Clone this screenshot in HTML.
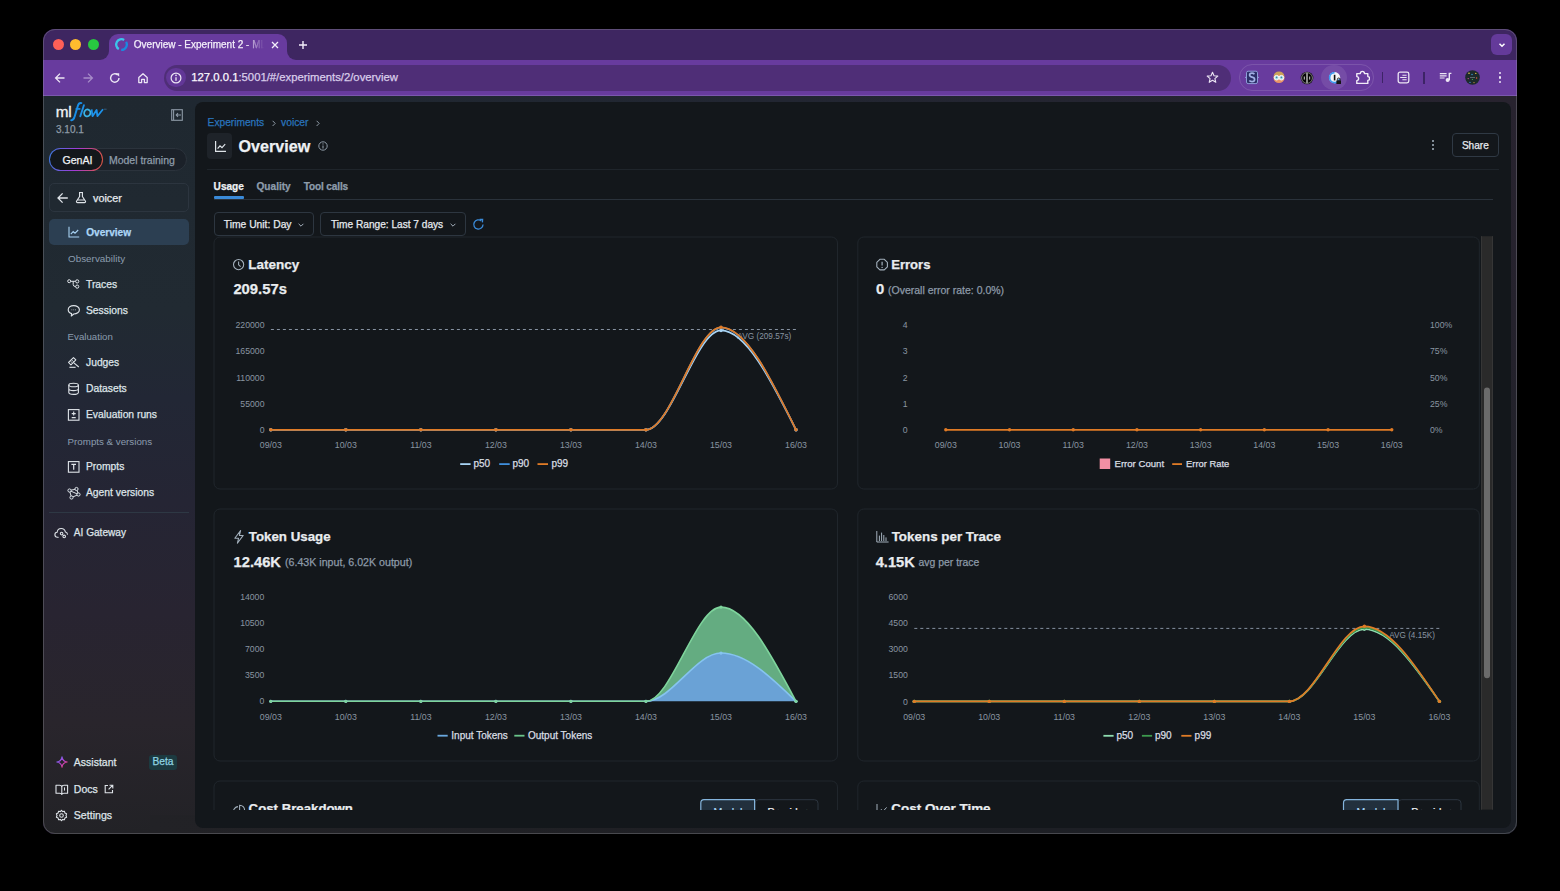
<!DOCTYPE html><html><head><meta charset="utf-8"><style>
html,body{margin:0;padding:0;}
body{width:1560px;height:891px;background:#000;position:relative;overflow:hidden;font-family:'Liberation Sans', sans-serif;}
.r{position:absolute;}
.t{position:absolute;line-height:1;white-space:nowrap;-webkit-text-stroke-width:0.25px;}
svg text{stroke-width:0.25px;}
</style></head><body>
<div class="r" style="left:43px;top:29px;width:1474px;height:805px;background:#3e2661;border-radius:12px;"></div>
<div class="r" style="left:43px;top:60px;width:1474px;height:36px;background:#683b9e;"></div>
<div class="r" style="left:43px;top:95px;width:1474px;height:1px;background:#7b58ad;"></div>
<div class="r" style="left:100px;top:50px;width:196px;height:10px;background:#683b9e;"></div>
<div class="r" style="left:43px;top:29px;width:66.4px;height:31px;background:#3e2661;border-radius:12px 0 9px 0;"></div>
<div class="r" style="left:287px;top:29px;width:1230px;height:31px;background:#3e2661;border-radius:0 12px 0 9px;"></div>
<div class="r" style="left:109.4px;top:34px;width:177.6px;height:27px;background:#683b9e;border-radius:9px 9px 0 0;"></div>
<div class="r" style="left:52.699999999999996px;top:38.8px;width:11.2px;height:11.2px;background:#fe5f57;border-radius:50%;"></div>
<div class="r" style="left:70.30000000000001px;top:38.8px;width:11.2px;height:11.2px;background:#febc2e;border-radius:50%;"></div>
<div class="r" style="left:87.9px;top:38.8px;width:11.2px;height:11.2px;background:#28c840;border-radius:50%;"></div>
<svg class="r" style="left:114px;top:37px;" width="15" height="15" viewBox="0 0 15 15"><path d="M4.85 12.09A5.3 5.3 0 0 1 10.15 2.91" fill="none" stroke="#3cc4ea" stroke-width="2.3"/><path d="M12.09 4.85A5.3 5.3 0 0 1 7.2 12.8" fill="none" stroke="#1a8ae0" stroke-width="2.3"/></svg>
<div class="t" style="left:133.80px;top:39.93px;font-size:10.0px;color:#f3eef9;width:130px;overflow:hidden;white-space:nowrap;-webkit-mask-image:linear-gradient(90deg,#000 86%,transparent 100%);">Overview - Experiment 2 - ML</div>
<svg class="r" style="left:270px;top:40px;" width="10" height="10" viewBox="0 0 10 10"><path d="M2 2L8 8M8 2L2 8" stroke="#f3eefa" stroke-width="1.3"/></svg>
<svg class="r" style="left:297.5px;top:39.5px;" width="10" height="10" viewBox="0 0 10 10"><path d="M5 1V9M1 5H9" stroke="#f3eefa" stroke-width="1.4"/></svg>
<div class="r" style="left:1491.3px;top:34.1px;width:20.5px;height:20.5px;background:#643a9a;border-radius:6px;"></div>
<svg class="r" style="left:1496.5px;top:39.5px;" width="10" height="10" viewBox="0 0 10 10"><path d="M2.5 3.8L5 6.3L7.5 3.8" fill="none" stroke="#fff" stroke-width="1.5"/></svg>
<svg class="r" style="left:54px;top:71.5px;" width="12" height="12" viewBox="0 0 12 12"><path d="M10.5 6H1.8M6 1.6L1.6 6L6 10.4" fill="none" stroke="#ece6f4" stroke-width="1.3"/></svg>
<svg class="r" style="left:81.5px;top:71.5px;" width="12" height="12" viewBox="0 0 12 12"><path d="M1.5 6H10.2M6 1.6L10.4 6L6 10.4" fill="none" stroke="#a78cc9" stroke-width="1.3"/></svg>
<svg class="r" style="left:109px;top:71.5px;" width="12" height="12" viewBox="0 0 12 12"><path d="M10 6A4.2 4.2 0 1 1 8.6 2.9" fill="none" stroke="#ece6f4" stroke-width="1.4"/><path d="M6.6 1.2H10.2V4.8Z" fill="#ece6f4"/></svg>
<svg class="r" style="left:137px;top:71.5px;" width="12" height="12" viewBox="0 0 12 12"><path d="M1.8 5.6L6 1.8L10.2 5.6V10.6H7.4V7.3H4.6V10.6H1.8Z" fill="none" stroke="#ece6f4" stroke-width="1.3" stroke-linejoin="round"/></svg>
<div class="r" style="left:163.6px;top:64.5px;width:1067.4px;height:26.1px;background:#4f2e77;border-radius:13px;"></div>
<div class="r" style="left:166.2px;top:67.7px;width:19.6px;height:19.6px;background:#623797;border-radius:50%;"></div>
<svg class="r" style="left:170px;top:71.5px;" width="12" height="12" viewBox="0 0 12 12"><circle cx="6" cy="6" r="4.9" fill="none" stroke="#ece6f4" stroke-width="1.2"/><path d="M6 5.2V8.8" stroke="#ece6f4" stroke-width="1.3"/><circle cx="6" cy="3.4" r="0.8" fill="#ece6f4"/></svg>
<div class="t" style="left:191.3px;top:71px;font-size:11.3px;line-height:13px;color:#d9cdea;white-space:nowrap"><span style="color:#fbf8fe">127.0.0.1</span>:5001/#/experiments/2/overview</div>
<svg class="r" style="left:1206px;top:71px;" width="13" height="13" viewBox="0 0 13 13"><path d="M6.5 1.3L8 4.8L11.8 5.1L8.9 7.6L9.8 11.3L6.5 9.3L3.2 11.3L4.1 7.6L1.2 5.1L5 4.8Z" fill="none" stroke="#ece6f4" stroke-width="1.1" stroke-linejoin="round"/></svg>
<div class="r" style="left:1238.6px;top:64.2px;width:135.8px;height:26.4px;border:1px solid rgba(255,255,255,0.13);border-radius:13.2px;box-sizing:border-box;"></div>
<svg class="r" style="left:1244px;top:70px;" width="16" height="15" viewBox="0 0 16 15"><rect x="2.5" y="1.2" width="11" height="12.4" rx="1.6" fill="#2c2f68" stroke="#8e9cd8" stroke-width="1"/><path d="M1 7.4H2.5M13.5 7.4H15" stroke="#8e9cd8" stroke-width="1"/><path d="M10.4 4.2Q9.6 3.2 8 3.2Q5.6 3.2 5.6 5.1Q5.6 6.6 8 7.1Q10.6 7.6 10.6 9.5Q10.6 11.6 8 11.6Q6.2 11.6 5.3 10.5" fill="none" stroke="#a3b1e6" stroke-width="1.7"/></svg>
<svg class="r" style="left:1272px;top:70px;" width="14" height="14" viewBox="0 0 14 14"><circle cx="7" cy="7.5" r="5.6" fill="#e89468"/><path d="M1.8 6.2Q2.2 1.6 7 1.6Q11.8 1.6 12.2 6.2Q9.5 4.6 7 4.8Q4.5 4.6 1.8 6.2Z" fill="#c9a05a"/><circle cx="4.6" cy="7.7" r="2.3" fill="#bfe9f2" stroke="#f4f8fa" stroke-width="1"/><circle cx="9.4" cy="7.7" r="2.3" fill="#bfe9f2" stroke="#f4f8fa" stroke-width="1"/><circle cx="4.6" cy="7.4" r="0.9" fill="#3a8aa0"/><circle cx="9.4" cy="7.4" r="0.9" fill="#3a8aa0"/></svg>
<svg class="r" style="left:1299.5px;top:70.5px;" width="14" height="14" viewBox="0 0 14 14"><circle cx="7" cy="7" r="6.3" fill="#050505"/><circle cx="7" cy="7" r="5.4" fill="none" stroke="#8a8a8a" stroke-width="0.9"/><path d="M7 2V12" stroke="#9a9a9a" stroke-width="1.8"/><path d="M4.3 5.5V8.6M9.7 5.5V8.6" stroke="#cfcfcf" stroke-width="1"/></svg>
<div class="r" style="left:1321.4px;top:64.6px;width:25.2px;height:25.2px;background:rgba(255,255,255,0.09);border-radius:50%;"></div>
<svg class="r" style="left:1327.5px;top:70.5px;" width="14" height="14" viewBox="0 0 14 14"><circle cx="6.6" cy="6.6" r="5.6" fill="#f4f4f6"/><path d="M6.6 1.6A5 5 0 1 0 11.4 8" fill="none" stroke="#3b9cf2" stroke-width="1.7"/><path d="M6.6 3.8V9.4" stroke="#111" stroke-width="1.6"/><rect x="8.4" y="9.2" width="4.6" height="3.8" rx="0.6" fill="#151515"/><path d="M9.4 9.2V8.3A1.3 1.3 0 0 1 12 8.3V9.2" fill="none" stroke="#151515" stroke-width="0.9"/></svg>
<svg class="r" style="left:1355px;top:69.5px;" width="15" height="15" viewBox="0 0 15 15"><path d="M1.8 3.6H5.3Q5.3 1.4 7.4 1.4Q9.5 1.4 9.5 3.6H12.8V6.6Q14.6 6.6 14.6 8.5Q14.6 10.4 12.8 10.4V13.4H1.8V10.6Q3.6 10.6 3.6 8.6Q3.6 6.6 1.8 6.6Z" fill="none" stroke="#f1ecf7" stroke-width="1.4" stroke-linejoin="round"/></svg>
<div class="r" style="left:1381.8px;top:71.7px;width:1.5px;height:11.6px;background:#3d2466;"></div>
<svg class="r" style="left:1397px;top:71px;" width="13" height="13" viewBox="0 0 13 13"><rect x="1.2" y="1.2" width="10.6" height="10.6" rx="1.8" fill="none" stroke="#ece6f4" stroke-width="1.3"/><path d="M5.4 4.2H9.6M3.2 6.5H9.6M5.4 8.8H9.6" stroke="#ece6f4" stroke-width="1.1"/></svg>
<div class="r" style="left:1423.3px;top:71.5px;width:1.5px;height:12px;background:#3d2466;"></div>
<svg class="r" style="left:1438.5px;top:71px;" width="13" height="12" viewBox="0 0 13 12"><path d="M0.8 2.6H7.6M0.8 4.8H7.6M0.8 7H5.6" stroke="#ece6f4" stroke-width="1.2"/><circle cx="8.6" cy="9.1" r="2" fill="#ece6f4"/><path d="M10.3 9.2V2.4H12.4" fill="none" stroke="#ece6f4" stroke-width="1.4"/></svg>
<svg class="r" style="left:1465px;top:69.7px;" width="15" height="15" viewBox="0 0 15 15"><circle cx="7.5" cy="7.5" r="7.3" fill="#1d2a2c"/><circle cx="4" cy="3.2" r="0.8" fill="#e8d04a"/><circle cx="10.8" cy="3.4" r="0.7" fill="#e8c040"/><circle cx="7" cy="4.5" r="0.7" fill="#3aa0e0"/><circle cx="3.2" cy="8.6" r="0.7" fill="#d04aa0"/><circle cx="11.6" cy="8" r="0.7" fill="#e0603a"/><circle cx="7.4" cy="9.5" r="0.6" fill="#40c050"/><circle cx="5" cy="12.4" r="0.7" fill="#3a80e8"/><circle cx="9" cy="12.6" r="0.6" fill="#e0a040"/><path d="M5 7.5H10" stroke="#9aa" stroke-width="0.5"/></svg>
<div class="r" style="left:1498.9px;top:72.04999999999998px;width:2.3px;height:2.3px;background:#ece6f4;border-radius:50%;"></div>
<div class="r" style="left:1498.9px;top:76.44999999999999px;width:2.3px;height:2.3px;background:#ece6f4;border-radius:50%;"></div>
<div class="r" style="left:1498.9px;top:80.85px;width:2.3px;height:2.3px;background:#ece6f4;border-radius:50%;"></div>
<div class="r" style="left:43px;top:96px;width:1474px;height:738px;background:linear-gradient(180deg,#1f2830 0%,#212a32 29%,#222735 41%,#252534 55%,#282431 70%,#29252c 85%,#222226 100%);border-radius:0 0 12px 12px;"></div>
<div class="r" style="left:180px;top:96px;width:1337px;height:12px;background:linear-gradient(90deg,#1f2831 0%,#222632 45%,#27232f 100%);border-radius:0 0 0 0;"></div>
<div class="r" style="left:1490px;top:96px;width:27px;height:738px;background:linear-gradient(180deg,#28232f 0%,#25222d 30%,#1f2128 60%,#1b1f26 100%);border-radius:0 0 12px 0;"></div>
<div class="r" style="left:150px;top:815px;width:1367px;height:19px;background:linear-gradient(90deg,#222226 0%,#1e1f24 50%,#1b1f26 100%);border-radius:0 0 12px 0;"></div>
<div class="r" style="left:195px;top:102px;width:1316px;height:726px;background:#13171b;border-radius:8px;"></div>
<div class="t" style="left:55.80px;top:104.25px;font-size:15.3px;color:#f2f4f6;-webkit-text-stroke:0.3px #f2f4f6;letter-spacing:-0.4px;">ml</div>
<svg class="r" style="left:68px;top:100px;" width="42" height="24" viewBox="0 0 42 24"><defs><linearGradient id="lg" x1="0" y1="0" x2="1" y2="0"><stop offset="0" stop-color="#1b8de6"/><stop offset="1" stop-color="#1f95ea"/></linearGradient></defs><path d="M3.2 20.2Q5.6 20.6 6.6 16.6L10 5.4Q10.9 2.6 13.4 3.1" fill="none" stroke="#1a8ee6" stroke-width="1.9" stroke-linecap="round"/><path d="M7.6 8.9H12.4" stroke="#1a8ee6" stroke-width="1.7"/><path d="M12.3 16.3L15.9 5.2" stroke="#1d90e8" stroke-width="1.9" stroke-linecap="round"/><ellipse cx="19.3" cy="12.9" rx="3.1" ry="3.5" transform="rotate(15 19.3 12.9)" fill="none" stroke="#3bb3e6" stroke-width="1.8"/><path d="M23.6 9.4L24.5 16.2L28.6 9.9L29.4 16.2L35 9.2" fill="none" stroke="#1d92ea" stroke-width="1.8" stroke-linejoin="round"/><path d="M36 9.2H38.6" stroke="#4a7fa8" stroke-width="0.6"/></svg>
<div class="t" style="left:56.00px;top:124.73px;font-size:10px;color:#8e9aa6;">3.10.1</div>
<svg class="r" style="left:170.5px;top:108.5px;" width="12" height="12" viewBox="0 0 12 12"><rect x="0.7" y="0.7" width="10.6" height="10.6" fill="none" stroke="#8d99a5" stroke-width="1.1"/><path d="M2.6 1V11" stroke="#8d99a5" stroke-width="1.1"/><path d="M10 6H5.2M7 4.2L5.2 6L7 7.8" fill="none" stroke="#8d99a5" stroke-width="1.1"/></svg>
<div class="r" style="left:49px;top:148.1px;width:138.4px;height:23px;background:#1b2129;border:1px solid #2b333c;border-radius:12px;box-sizing:border-box;"></div>
<div class="r" style="left:49px;top:148.1px;width:54px;height:23px;background:linear-gradient(100deg,#3a7be0,#a23ad8 50%,#e0583a);border-radius:12px;"></div>
<div class="r" style="left:50.2px;top:149.3px;width:51.6px;height:20.6px;background:#13171b;border-radius:11px;"></div>
<div class="t" style="left:62.40px;top:154.63px;font-size:10.6px;color:#eef1f4;">GenAI</div>
<div class="t" style="left:108.90px;top:154.51px;font-size:10.5px;color:#8f9dab;">Model training</div>
<div class="r" style="left:49.2px;top:183.3px;width:139.7px;height:29.2px;border:1px solid #2c353f;border-radius:5px;box-sizing:border-box;"></div>
<svg class="r" style="left:55.5px;top:192px;" width="13" height="12" viewBox="0 0 13 12"><path d="M11.8 6H2M6.6 1.4L2 6L6.6 10.6" fill="none" stroke="#dfe4e9" stroke-width="1.3"/></svg>
<svg class="r" style="left:74.5px;top:191px;" width="12" height="13" viewBox="0 0 12 13"><path d="M4 1.5H8M4.6 1.5V5.5L1.5 10.2Q1.2 11.6 2.6 11.6H9.4Q10.8 11.6 10.5 10.2L7.4 5.5V1.5M2.4 9H9.6" fill="none" stroke="#dfe4e9" stroke-width="1.15" stroke-linejoin="round"/></svg>
<div class="t" style="left:93.00px;top:193.26px;font-size:10.8px;color:#e6eaee;">voicer</div>
<div class="r" style="left:49.2px;top:219px;width:139.7px;height:25.5px;background:#2c3f52;border-radius:5px;"></div>
<svg class="r" style="left:67.5px;top:226px;" width="12" height="12" viewBox="0 0 12 12"><path d="M1 0.8V11H11.2" fill="none" stroke="#a8d2f3" stroke-width="1.1"/><path d="M2.8 8.2L5.2 5.6L7 7.2L10.2 4" fill="none" stroke="#a8d2f3" stroke-width="1.1"/></svg>
<div class="t" style="left:86.20px;top:228.35px;font-size:10.1px;color:#acd6f6;font-weight:700;">Overview</div>
<div class="t" style="left:68.00px;top:254.02px;font-size:9.9px;color:#8b9cae;-webkit-text-stroke-width:0;">Observability</div>
<svg class="r" style="left:67px;top:277.5px;" width="14" height="14" viewBox="0 0 14 14"><circle cx="2.2" cy="3.2" r="1.5" fill="none" stroke="#dfe4e9" stroke-width="1"/><circle cx="10.2" cy="3.4" r="1.6" fill="none" stroke="#dfe4e9" stroke-width="1"/><circle cx="10.2" cy="8.6" r="1.6" fill="none" stroke="#dfe4e9" stroke-width="1"/><path d="M3.7 3.3H8.6M6.2 3.3V6.5Q6.2 8.6 8.6 8.6" fill="none" stroke="#dfe4e9" stroke-width="1"/></svg>
<div class="t" style="left:86.00px;top:280.08px;font-size:10.3px;color:#dfe4e9;">Traces</div>
<svg class="r" style="left:67px;top:303.5px;" width="14" height="14" viewBox="0 0 14 14"><path d="M6.7 1.6C3.6 1.6 1.2 3.4 1.2 5.8C1.2 7.6 2.6 9 4.6 9.6L4.3 12L6.8 10C9.9 10 12.4 8.2 12.4 5.8C12.4 3.4 9.8 1.6 6.7 1.6Z" fill="none" stroke="#dfe4e9" stroke-width="1.1" stroke-linejoin="round"/><path d="M4.6 5.8H5.2M6.5 5.8H7.1M8.4 5.8H9" stroke="#dfe4e9" stroke-width="1"/></svg>
<div class="t" style="left:86.00px;top:306.08px;font-size:10.3px;color:#dfe4e9;">Sessions</div>
<div class="t" style="left:67.60px;top:331.99px;font-size:9.7px;color:#8b9cae;-webkit-text-stroke-width:0;">Evaluation</div>
<svg class="r" style="left:67px;top:355.5px;" width="14" height="14" viewBox="0 0 14 14"><path d="M6.47 1.53L8.87 3.93L3.93 8.87L1.53 6.47Z" fill="none" stroke="#dfe4e9" stroke-width="1.05" stroke-linejoin="round"/><path d="M4.4 3.6L6.8 6M3.2 4.8L5.6 7.2" stroke="#dfe4e9" stroke-width="0.8"/><path d="M6.6 6.6L11.8 11" stroke="#dfe4e9" stroke-width="1.1"/><path d="M2.4 11.3H8.6" stroke="#dfe4e9" stroke-width="1.1"/></svg>
<div class="t" style="left:86.00px;top:358.08px;font-size:10.3px;color:#dfe4e9;">Judges</div>
<svg class="r" style="left:67px;top:381.5px;" width="14" height="14" viewBox="0 0 14 14"><ellipse cx="6.6" cy="3" rx="4.8" ry="1.8" fill="none" stroke="#dfe4e9" stroke-width="1.1"/><path d="M1.8 3V10.6C1.8 11.6 4 12.4 6.6 12.4S11.4 11.6 11.4 10.6V3M1.8 6.8C1.8 7.8 4 8.6 6.6 8.6S11.4 7.8 11.4 6.8" fill="none" stroke="#dfe4e9" stroke-width="1.1"/></svg>
<div class="t" style="left:86.00px;top:384.08px;font-size:10.3px;color:#dfe4e9;">Datasets</div>
<svg class="r" style="left:67px;top:407.5px;" width="14" height="14" viewBox="0 0 14 14"><rect x="1.4" y="1.6" width="10.6" height="10.6" fill="none" stroke="#dfe4e9" stroke-width="1.1"/><path d="M6.7 3.6V7.6M4.7 5.6H8.7M4.7 9.6H8.7" stroke="#dfe4e9" stroke-width="1.1"/></svg>
<div class="t" style="left:86.00px;top:410.08px;font-size:10.3px;color:#dfe4e9;">Evaluation runs</div>
<div class="t" style="left:67.60px;top:436.55px;font-size:9.75px;color:#8b9cae;-webkit-text-stroke-width:0;">Prompts &amp; versions</div>
<svg class="r" style="left:67px;top:459.5px;" width="14" height="14" viewBox="0 0 14 14"><rect x="1.4" y="1.6" width="10.6" height="10.6" fill="none" stroke="#dfe4e9" stroke-width="1.1"/><path d="M4.4 4.4H9M6.7 4.4V9.8" stroke="#dfe4e9" stroke-width="1.2"/></svg>
<div class="t" style="left:86.00px;top:462.08px;font-size:10.3px;color:#dfe4e9;">Prompts</div>
<svg class="r" style="left:67px;top:485.5px;" width="14" height="14" viewBox="0 0 14 14"><path d="M2.5 4.5L9.5 3L11.5 8.5L4.5 11.5Z M2.5 4.5L11.5 8.5" fill="none" stroke="#dfe4e9" stroke-width="1"/><circle cx="2.5" cy="4.5" r="1.6" fill="#23283a" stroke="#dfe4e9" stroke-width="1"/><circle cx="9.5" cy="3" r="1.6" fill="#23283a" stroke="#dfe4e9" stroke-width="1"/><circle cx="11.5" cy="8.5" r="1.6" fill="#23283a" stroke="#dfe4e9" stroke-width="1"/><circle cx="4.5" cy="11.5" r="1.6" fill="#23283a" stroke="#dfe4e9" stroke-width="1"/></svg>
<div class="t" style="left:86.00px;top:488.08px;font-size:10.3px;color:#dfe4e9;">Agent versions</div>
<div class="r" style="left:49.1px;top:512px;width:139.8px;height:1px;background:#2e3844;"></div>
<svg class="r" style="left:54px;top:525.5px;" width="15" height="14" viewBox="0 0 15 14"><path d="M4.2 11.2H3.4C1.9 11.2 0.9 10 0.9 8.7C0.9 7.4 1.9 6.4 3.1 6.3C3.4 4.1 5.1 2.5 7.2 2.5C9.3 2.5 11 4 11.4 6C12.6 6.2 13.4 7.2 13.4 8.3" fill="none" stroke="#dfe4e9" stroke-width="1.1" stroke-linecap="round"/><circle cx="7.6" cy="7.6" r="1.3" fill="none" stroke="#dfe4e9" stroke-width="1.05"/><circle cx="10.2" cy="10.4" r="1.3" fill="none" stroke="#dfe4e9" stroke-width="1.05"/><path d="M8.5 8.5L9.3 9.5" stroke="#dfe4e9" stroke-width="1"/></svg>
<div class="t" style="left:73.80px;top:527.65px;font-size:10.1px;color:#dfe4e9;">AI Gateway</div>
<svg class="r" style="left:55.5px;top:756.2px;" width="12" height="12" viewBox="0 0 12 12"><defs><linearGradient id="ag" x1="0" y1="0" x2="1" y2="1"><stop offset="0" stop-color="#4a7be8"/><stop offset="0.5" stop-color="#b440d8"/><stop offset="1" stop-color="#f04a4a"/></linearGradient></defs><path d="M6 0.8Q6.6 5.4 11.2 6Q6.6 6.6 6 11.2Q5.4 6.6 0.8 6Q5.4 5.4 6 0.8Z" fill="none" stroke="url(#ag)" stroke-width="1.2" stroke-linejoin="round"/></svg>
<div class="t" style="left:73.80px;top:757.11px;font-size:10.5px;color:#dfe4e9;">Assistant</div>
<div class="r" style="left:149px;top:754.6px;width:27.9px;height:15.3px;background:#1c3a40;border-radius:3px;"></div>
<div class="t" style="left:152.50px;top:757.37px;font-size:10.2px;color:#8fd4e2;">Beta</div>
<svg class="r" style="left:54.5px;top:783px;" width="14" height="13" viewBox="0 0 14 13"><path d="M1 2.2H4.6Q6.6 2.2 6.8 4V11.4Q6.6 10.2 4.6 10.2H1Z M12.6 2.2H9Q7 2.2 6.8 4V11.4Q7 10.2 9 10.2H12.6Z" fill="none" stroke="#dfe4e9" stroke-width="1.1" stroke-linejoin="round"/><path d="M9.5 4.4V7.6" stroke="#dfe4e9" stroke-width="1"/></svg>
<div class="t" style="left:73.80px;top:783.91px;font-size:10.5px;color:#dfe4e9;">Docs</div>
<svg class="r" style="left:103.5px;top:784px;" width="10" height="10" viewBox="0 0 10 10"><path d="M4 1.5H1.2V8.8H8.5V6" fill="none" stroke="#dfe4e9" stroke-width="1.1"/><path d="M5.5 1.2H8.8V4.5M8.8 1.2L4.6 5.4" fill="none" stroke="#dfe4e9" stroke-width="1.1"/></svg>
<svg class="r" style="left:54.5px;top:809px;" width="13" height="13" viewBox="0 0 13 13"><path d="M6.5 1.2L7.6 2.6L9.4 2.2L9.9 4L11.6 4.8L11 6.5L11.6 8.2L9.9 9L9.4 10.8L7.6 10.4L6.5 11.8L5.4 10.4L3.6 10.8L3.1 9L1.4 8.2L2 6.5L1.4 4.8L3.1 4L3.6 2.2L5.4 2.6Z" fill="none" stroke="#dfe4e9" stroke-width="1.05" stroke-linejoin="round"/><circle cx="6.5" cy="6.5" r="1.8" fill="none" stroke="#dfe4e9" stroke-width="1.05"/></svg>
<div class="t" style="left:73.80px;top:810.03px;font-size:10.6px;color:#dfe4e9;">Settings</div>
<div class="t" style="left:207.60px;top:117.67px;font-size:10.2px;color:#2a74bc;">Experiments</div>
<svg class="r" style="left:270.5px;top:118.5px;" width="6" height="9" viewBox="0 0 6 9"><path d="M1.6 1.8L4.2 4.4L1.6 7" fill="none" stroke="#8d99a5" stroke-width="1"/></svg>
<div class="t" style="left:281.00px;top:117.58px;font-size:10.3px;color:#2a74bc;">voicer</div>
<svg class="r" style="left:315.3px;top:118.5px;" width="6" height="9" viewBox="0 0 6 9"><path d="M1.6 1.8L4.2 4.4L1.6 7" fill="none" stroke="#8d99a5" stroke-width="1"/></svg>
<div class="r" style="left:207.4px;top:133px;width:24.6px;height:25.7px;background:#1e2329;border-radius:4px;"></div>
<svg class="r" style="left:213.5px;top:139.5px;" width="13" height="13" viewBox="0 0 13 13"><path d="M1.6 1V11.4H12" fill="none" stroke="#dfe4e9" stroke-width="1.2"/><path d="M3.6 8.6L6 5.8L8 7.6L11.2 4.2" fill="none" stroke="#dfe4e9" stroke-width="1.2"/></svg>
<div class="t" style="left:238.60px;top:138.37px;font-size:16.1px;color:#eef1f4;font-weight:700;">Overview</div>
<svg class="r" style="left:317.5px;top:141px;" width="10" height="10" viewBox="0 0 10 10"><circle cx="5" cy="5" r="4.2" fill="none" stroke="#8d99a5" stroke-width="1"/><path d="M5 4.4V7.4" stroke="#8d99a5" stroke-width="1.1"/><circle cx="5" cy="2.9" r="0.65" fill="#8d99a5"/></svg>
<div class="r" style="left:1432.1000000000001px;top:140.29999999999998px;width:2.2px;height:2.2px;background:#a9b6c2;border-radius:50%;"></div>
<div class="r" style="left:1432.1000000000001px;top:144.1px;width:2.2px;height:2.2px;background:#a9b6c2;border-radius:50%;"></div>
<div class="r" style="left:1432.1000000000001px;top:147.9px;width:2.2px;height:2.2px;background:#a9b6c2;border-radius:50%;"></div>
<div class="r" style="left:1452.1px;top:133.2px;width:46.5px;height:24px;border:1px solid #2f3944;border-radius:4px;box-sizing:border-box;"></div>
<div class="t" style="left:1461.90px;top:140.65px;font-size:10.1px;color:#e6eaee;">Share</div>
<div class="r" style="left:207px;top:168.5px;width:1291.5px;height:1px;background:#1f252b;"></div>
<div class="t" style="left:213.60px;top:181.55px;font-size:10.1px;color:#eef1f4;font-weight:700;">Usage</div>
<div class="t" style="left:256.50px;top:181.55px;font-size:10.1px;color:#8d9cab;font-weight:700;">Quality</div>
<div class="t" style="left:303.70px;top:181.55px;font-size:10.1px;color:#8d9cab;font-weight:700;letter-spacing:-0.15px;">Tool calls</div>
<div class="r" style="left:213.6px;top:198.5px;width:1279px;height:1px;background:#2a323b;"></div>
<div class="r" style="left:213.6px;top:196.2px;width:30.5px;height:3px;background:#3a8ad8;border-radius:1px;"></div>
<div class="r" style="left:213.7px;top:212.3px;width:100px;height:23.5px;border:1px solid #2d3640;border-radius:4px;box-sizing:border-box;"></div>
<div class="t" style="left:223.80px;top:219.78px;font-size:10.3px;color:#e6eaee;">Time Unit: Day</div>
<svg class="r" style="left:297px;top:220.5px;" width="8" height="8" viewBox="0 0 8 8"><path d="M1.6 2.8L4 5.2L6.4 2.8" fill="none" stroke="#a3afbb" stroke-width="1"/></svg>
<div class="r" style="left:320.4px;top:212.3px;width:145.2px;height:23.5px;border:1px solid #2d3640;border-radius:4px;box-sizing:border-box;"></div>
<div class="t" style="left:331.00px;top:219.91px;font-size:10.15px;color:#e6eaee;">Time Range: Last 7 days</div>
<svg class="r" style="left:449px;top:220.5px;" width="8" height="8" viewBox="0 0 8 8"><path d="M1.6 2.8L4 5.2L6.4 2.8" fill="none" stroke="#a3afbb" stroke-width="1"/></svg>
<svg class="r" style="left:471.5px;top:217.5px;" width="13" height="13" viewBox="0 0 13 13"><path d="M11 6.5A4.6 4.6 0 1 1 9.4 3" fill="none" stroke="#3a8ad8" stroke-width="1.3"/><path d="M7.6 1.3L10.6 1.4L10.4 4.4" fill="none" stroke="#3a8ad8" stroke-width="1.3"/></svg>
<svg class="r" style="left:195px;top:236px;font-family:'Liberation Sans', sans-serif" width="1300" height="574" viewBox="195 236 1300 574"><rect x="214.00" y="237.00" width="623.50" height="252.00" rx="6" fill="none" stroke="#20262c" stroke-width="1"/><rect x="857.80" y="237.00" width="621.50" height="252.00" rx="6" fill="none" stroke="#20262c" stroke-width="1"/><rect x="214.00" y="509.00" width="623.50" height="252.00" rx="6" fill="none" stroke="#20262c" stroke-width="1"/><rect x="857.80" y="509.00" width="621.50" height="252.00" rx="6" fill="none" stroke="#20262c" stroke-width="1"/><rect x="214.00" y="781.00" width="623.50" height="252.00" rx="6" fill="none" stroke="#20262c" stroke-width="1"/><rect x="857.80" y="781.00" width="621.50" height="252.00" rx="6" fill="none" stroke="#20262c" stroke-width="1"/><circle cx="238.6" cy="264.6" r="5.1" fill="none" stroke="#a3b0bc" stroke-width="1.1"/><path d="M238.6 261.4V264.8L240.6 266.6" fill="none" stroke="#a3b0bc" stroke-width="1.1"/><text x="248.30" y="269.40" font-size="13.5" fill="#e9ecef" stroke="#e9ecef" text-anchor="start" font-weight="700">Latency</text><text x="233.40" y="294.30" font-size="14.8" fill="#e9ecef" stroke="#e9ecef" text-anchor="start" font-weight="700">209.57s</text><text x="264.50" y="328.00" font-size="8.7" fill="#8995a1" stroke="#8995a1" text-anchor="end" style="stroke-width:0">220000</text><text x="264.50" y="354.25" font-size="8.7" fill="#8995a1" stroke="#8995a1" text-anchor="end" style="stroke-width:0">165000</text><text x="264.50" y="380.50" font-size="8.7" fill="#8995a1" stroke="#8995a1" text-anchor="end" style="stroke-width:0">110000</text><text x="264.50" y="406.75" font-size="8.7" fill="#8995a1" stroke="#8995a1" text-anchor="end" style="stroke-width:0">55000</text><text x="264.50" y="433.00" font-size="8.7" fill="#8995a1" stroke="#8995a1" text-anchor="end" style="stroke-width:0">0</text><text x="270.80" y="447.70" font-size="8.8" fill="#8995a1" stroke="#8995a1" text-anchor="middle" style="stroke-width:0">09/03</text><text x="345.83" y="447.70" font-size="8.8" fill="#8995a1" stroke="#8995a1" text-anchor="middle" style="stroke-width:0">10/03</text><text x="420.86" y="447.70" font-size="8.8" fill="#8995a1" stroke="#8995a1" text-anchor="middle" style="stroke-width:0">11/03</text><text x="495.89" y="447.70" font-size="8.8" fill="#8995a1" stroke="#8995a1" text-anchor="middle" style="stroke-width:0">12/03</text><text x="570.92" y="447.70" font-size="8.8" fill="#8995a1" stroke="#8995a1" text-anchor="middle" style="stroke-width:0">13/03</text><text x="645.95" y="447.70" font-size="8.8" fill="#8995a1" stroke="#8995a1" text-anchor="middle" style="stroke-width:0">14/03</text><text x="720.98" y="447.70" font-size="8.8" fill="#8995a1" stroke="#8995a1" text-anchor="middle" style="stroke-width:0">15/03</text><text x="796.01" y="447.70" font-size="8.8" fill="#8995a1" stroke="#8995a1" text-anchor="middle" style="stroke-width:0">16/03</text><text x="737.30" y="339.40" font-size="8.25" fill="#8995a1" stroke="#8995a1" text-anchor="start" style="stroke-width:0">AVG (209.57s)</text><path d="M270.9 329.5H796.2" stroke="#8591a0" stroke-width="1" stroke-dasharray="3 3"/><path d="M270.80,429.80C295.81,429.80 320.82,429.80 345.83,429.80C370.84,429.80 395.85,429.80 420.86,429.80C445.87,429.80 470.88,429.80 495.89,429.80C520.90,429.80 545.91,429.80 570.92,429.80C595.93,429.80 620.94,429.80 645.95,429.80C670.96,429.80 695.97,330.43 720.98,330.43C745.99,330.43 771.00,380.12 796.01,429.80" fill="none" stroke="#a8d4f4" stroke-width="1.7"/><circle cx="270.80" cy="429.80" r="1.7" fill="#a8d4f4"/><circle cx="345.83" cy="429.80" r="1.7" fill="#a8d4f4"/><circle cx="420.86" cy="429.80" r="1.7" fill="#a8d4f4"/><circle cx="495.89" cy="429.80" r="1.7" fill="#a8d4f4"/><circle cx="570.92" cy="429.80" r="1.7" fill="#a8d4f4"/><circle cx="645.95" cy="429.80" r="1.7" fill="#a8d4f4"/><circle cx="720.98" cy="330.43" r="1.7" fill="#a8d4f4"/><circle cx="796.01" cy="429.80" r="1.7" fill="#a8d4f4"/><path d="M270.80,429.80C295.81,429.80 320.82,429.80 345.83,429.80C370.84,429.80 395.85,429.80 420.86,429.80C445.87,429.80 470.88,429.80 495.89,429.80C520.90,429.80 545.91,429.80 570.92,429.80C595.93,429.80 620.94,429.80 645.95,429.80C670.96,429.80 695.97,327.57 720.98,327.57C745.99,327.57 771.00,378.68 796.01,429.80" fill="none" stroke="#3f8fdc" stroke-width="1.7"/><circle cx="270.80" cy="429.80" r="1.7" fill="#3f8fdc"/><circle cx="345.83" cy="429.80" r="1.7" fill="#3f8fdc"/><circle cx="420.86" cy="429.80" r="1.7" fill="#3f8fdc"/><circle cx="495.89" cy="429.80" r="1.7" fill="#3f8fdc"/><circle cx="570.92" cy="429.80" r="1.7" fill="#3f8fdc"/><circle cx="645.95" cy="429.80" r="1.7" fill="#3f8fdc"/><circle cx="720.98" cy="327.57" r="1.7" fill="#3f8fdc"/><circle cx="796.01" cy="429.80" r="1.7" fill="#3f8fdc"/><path d="M270.80,429.80C295.81,429.80 320.82,429.80 345.83,429.80C370.84,429.80 395.85,429.80 420.86,429.80C445.87,429.80 470.88,429.80 495.89,429.80C520.90,429.80 545.91,429.80 570.92,429.80C595.93,429.80 620.94,429.80 645.95,429.80C670.96,429.80 695.97,327.28 720.98,327.28C745.99,327.28 771.00,378.54 796.01,429.80" fill="none" stroke="#e07b26" stroke-width="1.7"/><circle cx="270.80" cy="429.80" r="1.7" fill="#e07b26"/><circle cx="345.83" cy="429.80" r="1.7" fill="#e07b26"/><circle cx="420.86" cy="429.80" r="1.7" fill="#e07b26"/><circle cx="495.89" cy="429.80" r="1.7" fill="#e07b26"/><circle cx="570.92" cy="429.80" r="1.7" fill="#e07b26"/><circle cx="645.95" cy="429.80" r="1.7" fill="#e07b26"/><circle cx="720.98" cy="327.28" r="1.7" fill="#e07b26"/><circle cx="796.01" cy="429.80" r="1.7" fill="#e07b26"/><path d="M460.20 464.10H470.60" stroke="#a8d4f4" stroke-width="1.8"/><text x="473.40" y="466.90" font-size="10" fill="#d9dee3" stroke="#d9dee3" text-anchor="start">p50</text><path d="M499.20 464.10H509.70" stroke="#3f8fdc" stroke-width="1.8"/><text x="512.40" y="466.90" font-size="10" fill="#d9dee3" stroke="#d9dee3" text-anchor="start">p90</text><path d="M537.50 464.10H548.00" stroke="#e07b26" stroke-width="1.8"/><text x="551.40" y="466.90" font-size="10" fill="#d9dee3" stroke="#d9dee3" text-anchor="start">p99</text><path d="M879.9 259.3H884.3L887.4 262.4V266.8L884.3 269.9H879.9L876.8 266.8V262.4Z" fill="none" stroke="#a3b0bc" stroke-width="1.1" stroke-linejoin="round"/><path d="M882.1 261.8V265.4" stroke="#a3b0bc" stroke-width="1.2"/><circle cx="882.1" cy="267.4" r="0.7" fill="#a3b0bc"/><text x="891.20" y="269.40" font-size="13.1" fill="#e9ecef" stroke="#e9ecef" text-anchor="start" font-weight="700">Errors</text><text x="876.10" y="294.30" font-size="14.8" fill="#e9ecef" stroke="#e9ecef" text-anchor="start" font-weight="700">0</text><text x="888.00" y="294.10" font-size="10.5" fill="#8d9aa8" stroke="#8d9aa8" text-anchor="start">(Overall error rate: 0.0%)</text><text x="907.70" y="328.00" font-size="8.7" fill="#8995a1" stroke="#8995a1" text-anchor="end" style="stroke-width:0">4</text><text x="907.70" y="354.25" font-size="8.7" fill="#8995a1" stroke="#8995a1" text-anchor="end" style="stroke-width:0">3</text><text x="907.70" y="380.50" font-size="8.7" fill="#8995a1" stroke="#8995a1" text-anchor="end" style="stroke-width:0">2</text><text x="907.70" y="406.75" font-size="8.7" fill="#8995a1" stroke="#8995a1" text-anchor="end" style="stroke-width:0">1</text><text x="907.70" y="433.00" font-size="8.7" fill="#8995a1" stroke="#8995a1" text-anchor="end" style="stroke-width:0">0</text><text x="1430.00" y="328.00" font-size="8.7" fill="#8995a1" stroke="#8995a1" text-anchor="start" style="stroke-width:0">100%</text><text x="1430.00" y="354.25" font-size="8.7" fill="#8995a1" stroke="#8995a1" text-anchor="start" style="stroke-width:0">75%</text><text x="1430.00" y="380.50" font-size="8.7" fill="#8995a1" stroke="#8995a1" text-anchor="start" style="stroke-width:0">50%</text><text x="1430.00" y="406.75" font-size="8.7" fill="#8995a1" stroke="#8995a1" text-anchor="start" style="stroke-width:0">25%</text><text x="1430.00" y="433.00" font-size="8.7" fill="#8995a1" stroke="#8995a1" text-anchor="start" style="stroke-width:0">0%</text><text x="945.80" y="447.70" font-size="8.8" fill="#8995a1" stroke="#8995a1" text-anchor="middle" style="stroke-width:0">09/03</text><text x="1009.51" y="447.70" font-size="8.8" fill="#8995a1" stroke="#8995a1" text-anchor="middle" style="stroke-width:0">10/03</text><text x="1073.22" y="447.70" font-size="8.8" fill="#8995a1" stroke="#8995a1" text-anchor="middle" style="stroke-width:0">11/03</text><text x="1136.93" y="447.70" font-size="8.8" fill="#8995a1" stroke="#8995a1" text-anchor="middle" style="stroke-width:0">12/03</text><text x="1200.64" y="447.70" font-size="8.8" fill="#8995a1" stroke="#8995a1" text-anchor="middle" style="stroke-width:0">13/03</text><text x="1264.35" y="447.70" font-size="8.8" fill="#8995a1" stroke="#8995a1" text-anchor="middle" style="stroke-width:0">14/03</text><text x="1328.06" y="447.70" font-size="8.8" fill="#8995a1" stroke="#8995a1" text-anchor="middle" style="stroke-width:0">15/03</text><text x="1391.77" y="447.70" font-size="8.8" fill="#8995a1" stroke="#8995a1" text-anchor="middle" style="stroke-width:0">16/03</text><path d="M945.80,429.80C967.04,429.80 988.27,429.80 1009.51,429.80C1030.75,429.80 1051.98,429.80 1073.22,429.80C1094.46,429.80 1115.69,429.80 1136.93,429.80C1158.17,429.80 1179.40,429.80 1200.64,429.80C1221.88,429.80 1243.11,429.80 1264.35,429.80C1285.59,429.80 1306.82,429.80 1328.06,429.80C1349.30,429.80 1370.53,429.80 1391.77,429.80" fill="none" stroke="#e07b26" stroke-width="1.7"/><circle cx="945.80" cy="429.80" r="1.7" fill="#e07b26"/><circle cx="1009.51" cy="429.80" r="1.7" fill="#e07b26"/><circle cx="1073.22" cy="429.80" r="1.7" fill="#e07b26"/><circle cx="1136.93" cy="429.80" r="1.7" fill="#e07b26"/><circle cx="1200.64" cy="429.80" r="1.7" fill="#e07b26"/><circle cx="1264.35" cy="429.80" r="1.7" fill="#e07b26"/><circle cx="1328.06" cy="429.80" r="1.7" fill="#e07b26"/><circle cx="1391.77" cy="429.80" r="1.7" fill="#e07b26"/><rect x="1099.7" y="458.5" width="10.5" height="10.5" fill="#f28fa4"/><text x="1114.50" y="466.90" font-size="9.6" fill="#d9dee3" stroke="#d9dee3" text-anchor="start">Error Count</text><path d="M1172.2 464.1H1182" stroke="#e07b26" stroke-width="1.8"/><text x="1186.00" y="466.90" font-size="9.4" fill="#d9dee3" stroke="#d9dee3" text-anchor="start">Error Rate</text><path d="M240.6 530.6L234.8 538.2H238.6L237.4 543.2L243.2 535.4H239.4Z" fill="none" stroke="#a3b0bc" stroke-width="1.05" stroke-linejoin="round"/><text x="248.80" y="541.30" font-size="13.3" fill="#e9ecef" stroke="#e9ecef" text-anchor="start" font-weight="700">Token Usage</text><text x="233.60" y="566.60" font-size="14.7" fill="#e9ecef" stroke="#e9ecef" text-anchor="start" font-weight="700">12.46K</text><text x="285.00" y="566.20" font-size="10.65" fill="#8d9aa8" stroke="#8d9aa8" text-anchor="start">(6.43K input, 6.02K output)</text><text x="264.30" y="599.70" font-size="8.7" fill="#8995a1" stroke="#8995a1" text-anchor="end" style="stroke-width:0">14000</text><text x="264.30" y="625.88" font-size="8.7" fill="#8995a1" stroke="#8995a1" text-anchor="end" style="stroke-width:0">10500</text><text x="264.30" y="652.06" font-size="8.7" fill="#8995a1" stroke="#8995a1" text-anchor="end" style="stroke-width:0">7000</text><text x="264.30" y="678.24" font-size="8.7" fill="#8995a1" stroke="#8995a1" text-anchor="end" style="stroke-width:0">3500</text><text x="264.30" y="704.42" font-size="8.7" fill="#8995a1" stroke="#8995a1" text-anchor="end" style="stroke-width:0">0</text><text x="270.80" y="719.60" font-size="8.8" fill="#8995a1" stroke="#8995a1" text-anchor="middle" style="stroke-width:0">09/03</text><text x="345.83" y="719.60" font-size="8.8" fill="#8995a1" stroke="#8995a1" text-anchor="middle" style="stroke-width:0">10/03</text><text x="420.86" y="719.60" font-size="8.8" fill="#8995a1" stroke="#8995a1" text-anchor="middle" style="stroke-width:0">11/03</text><text x="495.89" y="719.60" font-size="8.8" fill="#8995a1" stroke="#8995a1" text-anchor="middle" style="stroke-width:0">12/03</text><text x="570.92" y="719.60" font-size="8.8" fill="#8995a1" stroke="#8995a1" text-anchor="middle" style="stroke-width:0">13/03</text><text x="645.95" y="719.60" font-size="8.8" fill="#8995a1" stroke="#8995a1" text-anchor="middle" style="stroke-width:0">14/03</text><text x="720.98" y="719.60" font-size="8.8" fill="#8995a1" stroke="#8995a1" text-anchor="middle" style="stroke-width:0">15/03</text><text x="796.01" y="719.60" font-size="8.8" fill="#8995a1" stroke="#8995a1" text-anchor="middle" style="stroke-width:0">16/03</text><path d="M270.80,701.30C295.81,701.30 320.82,701.30 345.83,701.30C370.84,701.30 395.85,701.30 420.86,701.30C445.87,701.30 470.88,701.30 495.89,701.30C520.90,701.30 545.91,701.30 570.92,701.30C595.93,701.30 620.94,701.30 645.95,701.30C670.96,701.30 695.97,607.14 720.98,607.14C745.99,607.14 771.00,654.22 796.01,701.30L796.01,701.30C771.00,677.18 745.99,653.06 720.98,653.06C695.97,653.06 670.96,701.30 645.95,701.30C620.94,701.30 595.93,701.30 570.92,701.30C545.91,701.30 520.90,701.30 495.89,701.30C470.88,701.30 445.87,701.30 420.86,701.30C395.85,701.30 370.84,701.30 345.83,701.30C320.82,701.30 295.81,701.30 270.80,701.30Z" fill="#68b487" fill-opacity="0.95"/><path d="M270.80,701.30C295.81,701.30 320.82,701.30 345.83,701.30C370.84,701.30 395.85,701.30 420.86,701.30C445.87,701.30 470.88,701.30 495.89,701.30C520.90,701.30 545.91,701.30 570.92,701.30C595.93,701.30 620.94,701.30 645.95,701.30C670.96,701.30 695.97,653.06 720.98,653.06C745.99,653.06 771.00,677.18 796.01,701.30L796.01,701.30L270.80,701.30Z" fill="#6aa2d6"/><path d="M270.80,701.30C295.81,701.30 320.82,701.30 345.83,701.30C370.84,701.30 395.85,701.30 420.86,701.30C445.87,701.30 470.88,701.30 495.89,701.30C520.90,701.30 545.91,701.30 570.92,701.30C595.93,701.30 620.94,701.30 645.95,701.30C670.96,701.30 695.97,653.06 720.98,653.06C745.99,653.06 771.00,677.18 796.01,701.30" fill="none" stroke="#86c4f0" stroke-width="1.6"/><path d="M270.80,701.30C295.81,701.30 320.82,701.30 345.83,701.30C370.84,701.30 395.85,701.30 420.86,701.30C445.87,701.30 470.88,701.30 495.89,701.30C520.90,701.30 545.91,701.30 570.92,701.30C595.93,701.30 620.94,701.30 645.95,701.30C670.96,701.30 695.97,607.14 720.98,607.14C745.99,607.14 771.00,654.22 796.01,701.30" fill="none" stroke="#7ed49c" stroke-width="1.6"/><circle cx="270.80" cy="701.30" r="1.6" fill="#86c4f0"/><circle cx="345.83" cy="701.30" r="1.6" fill="#86c4f0"/><circle cx="420.86" cy="701.30" r="1.6" fill="#86c4f0"/><circle cx="495.89" cy="701.30" r="1.6" fill="#86c4f0"/><circle cx="570.92" cy="701.30" r="1.6" fill="#86c4f0"/><circle cx="645.95" cy="701.30" r="1.6" fill="#86c4f0"/><circle cx="720.98" cy="653.06" r="1.6" fill="#86c4f0"/><circle cx="796.01" cy="701.30" r="1.6" fill="#86c4f0"/><circle cx="270.80" cy="701.30" r="1.6" fill="#7ed49c"/><circle cx="345.83" cy="701.30" r="1.6" fill="#7ed49c"/><circle cx="420.86" cy="701.30" r="1.6" fill="#7ed49c"/><circle cx="495.89" cy="701.30" r="1.6" fill="#7ed49c"/><circle cx="570.92" cy="701.30" r="1.6" fill="#7ed49c"/><circle cx="645.95" cy="701.30" r="1.6" fill="#7ed49c"/><circle cx="720.98" cy="607.14" r="1.6" fill="#7ed49c"/><circle cx="796.01" cy="701.30" r="1.6" fill="#7ed49c"/><path d="M437.50 735.70H447.70" stroke="#6aa8e0" stroke-width="1.8"/><text x="451.30" y="738.50" font-size="10" fill="#d9dee3" stroke="#d9dee3" text-anchor="start">Input Tokens</text><path d="M514.30 735.70H524.50" stroke="#6ac48a" stroke-width="1.8"/><text x="528.00" y="738.50" font-size="10" fill="#d9dee3" stroke="#d9dee3" text-anchor="start">Output Tokens</text><path d="M876.8 531V542H888.6M879.4 541V535.6M881.6 541V532.6M883.8 541V535M886 541V537.4" fill="none" stroke="#a3b0bc" stroke-width="1"/><text x="891.70" y="541.30" font-size="13.4" fill="#e9ecef" stroke="#e9ecef" text-anchor="start" font-weight="700">Tokens per Trace</text><text x="875.70" y="566.60" font-size="14.65" fill="#e9ecef" stroke="#e9ecef" text-anchor="start" font-weight="700">4.15K</text><text x="918.60" y="566.20" font-size="10.4" fill="#8d9aa8" stroke="#8d9aa8" text-anchor="start">avg per trace</text><text x="907.80" y="599.70" font-size="8.7" fill="#8995a1" stroke="#8995a1" text-anchor="end" style="stroke-width:0">6000</text><text x="907.80" y="625.90" font-size="8.7" fill="#8995a1" stroke="#8995a1" text-anchor="end" style="stroke-width:0">4500</text><text x="907.80" y="652.10" font-size="8.7" fill="#8995a1" stroke="#8995a1" text-anchor="end" style="stroke-width:0">3000</text><text x="907.80" y="678.30" font-size="8.7" fill="#8995a1" stroke="#8995a1" text-anchor="end" style="stroke-width:0">1500</text><text x="907.80" y="704.50" font-size="8.7" fill="#8995a1" stroke="#8995a1" text-anchor="end" style="stroke-width:0">0</text><text x="914.20" y="719.60" font-size="8.8" fill="#8995a1" stroke="#8995a1" text-anchor="middle" style="stroke-width:0">09/03</text><text x="989.23" y="719.60" font-size="8.8" fill="#8995a1" stroke="#8995a1" text-anchor="middle" style="stroke-width:0">10/03</text><text x="1064.26" y="719.60" font-size="8.8" fill="#8995a1" stroke="#8995a1" text-anchor="middle" style="stroke-width:0">11/03</text><text x="1139.29" y="719.60" font-size="8.8" fill="#8995a1" stroke="#8995a1" text-anchor="middle" style="stroke-width:0">12/03</text><text x="1214.32" y="719.60" font-size="8.8" fill="#8995a1" stroke="#8995a1" text-anchor="middle" style="stroke-width:0">13/03</text><text x="1289.35" y="719.60" font-size="8.8" fill="#8995a1" stroke="#8995a1" text-anchor="middle" style="stroke-width:0">14/03</text><text x="1364.38" y="719.60" font-size="8.8" fill="#8995a1" stroke="#8995a1" text-anchor="middle" style="stroke-width:0">15/03</text><text x="1439.41" y="719.60" font-size="8.8" fill="#8995a1" stroke="#8995a1" text-anchor="middle" style="stroke-width:0">16/03</text><text x="1389.20" y="638.10" font-size="8.2" fill="#8995a1" stroke="#8995a1" text-anchor="start" style="stroke-width:0">AVG (4.15K)</text><path d="M914.3 628.4H1439.4" stroke="#8591a0" stroke-width="1" stroke-dasharray="3 3"/><path d="M914.20,701.40C939.21,701.40 964.22,701.40 989.23,701.40C1014.24,701.40 1039.25,701.40 1064.26,701.40C1089.27,701.40 1114.28,701.40 1139.29,701.40C1164.30,701.40 1189.31,701.40 1214.32,701.40C1239.33,701.40 1264.34,701.40 1289.35,701.40C1314.36,701.40 1339.37,629.26 1364.38,629.26C1389.39,629.26 1414.40,665.33 1439.41,701.40" fill="none" stroke="#8fdcb0" stroke-width="1.7"/><circle cx="914.20" cy="701.40" r="1.7" fill="#8fdcb0"/><circle cx="989.23" cy="701.40" r="1.7" fill="#8fdcb0"/><circle cx="1064.26" cy="701.40" r="1.7" fill="#8fdcb0"/><circle cx="1139.29" cy="701.40" r="1.7" fill="#8fdcb0"/><circle cx="1214.32" cy="701.40" r="1.7" fill="#8fdcb0"/><circle cx="1289.35" cy="701.40" r="1.7" fill="#8fdcb0"/><circle cx="1364.38" cy="629.26" r="1.7" fill="#8fdcb0"/><circle cx="1439.41" cy="701.40" r="1.7" fill="#8fdcb0"/><path d="M914.20,701.40C939.21,701.40 964.22,701.40 989.23,701.40C1014.24,701.40 1039.25,701.40 1064.26,701.40C1089.27,701.40 1114.28,701.40 1139.29,701.40C1164.30,701.40 1189.31,701.40 1214.32,701.40C1239.33,701.40 1264.34,701.40 1289.35,701.40C1314.36,701.40 1339.37,627.69 1364.38,627.69C1389.39,627.69 1414.40,664.55 1439.41,701.40" fill="none" stroke="#3d9a4e" stroke-width="1.7"/><circle cx="914.20" cy="701.40" r="1.7" fill="#3d9a4e"/><circle cx="989.23" cy="701.40" r="1.7" fill="#3d9a4e"/><circle cx="1064.26" cy="701.40" r="1.7" fill="#3d9a4e"/><circle cx="1139.29" cy="701.40" r="1.7" fill="#3d9a4e"/><circle cx="1214.32" cy="701.40" r="1.7" fill="#3d9a4e"/><circle cx="1289.35" cy="701.40" r="1.7" fill="#3d9a4e"/><circle cx="1364.38" cy="627.69" r="1.7" fill="#3d9a4e"/><circle cx="1439.41" cy="701.40" r="1.7" fill="#3d9a4e"/><path d="M914.20,701.40C939.21,701.40 964.22,701.40 989.23,701.40C1014.24,701.40 1039.25,701.40 1064.26,701.40C1089.27,701.40 1114.28,701.40 1139.29,701.40C1164.30,701.40 1189.31,701.40 1214.32,701.40C1239.33,701.40 1264.34,701.40 1289.35,701.40C1314.36,701.40 1339.37,626.29 1364.38,626.29C1389.39,626.29 1414.40,663.85 1439.41,701.40" fill="none" stroke="#e07b26" stroke-width="1.7"/><circle cx="914.20" cy="701.40" r="1.7" fill="#e07b26"/><circle cx="989.23" cy="701.40" r="1.7" fill="#e07b26"/><circle cx="1064.26" cy="701.40" r="1.7" fill="#e07b26"/><circle cx="1139.29" cy="701.40" r="1.7" fill="#e07b26"/><circle cx="1214.32" cy="701.40" r="1.7" fill="#e07b26"/><circle cx="1289.35" cy="701.40" r="1.7" fill="#e07b26"/><circle cx="1364.38" cy="626.29" r="1.7" fill="#e07b26"/><circle cx="1439.41" cy="701.40" r="1.7" fill="#e07b26"/><path d="M1103.40 735.80H1113.60" stroke="#8fdcb0" stroke-width="1.8"/><text x="1116.50" y="738.60" font-size="10" fill="#d9dee3" stroke="#d9dee3" text-anchor="start">p50</text><path d="M1141.90 735.80H1152.10" stroke="#3d9a4e" stroke-width="1.8"/><text x="1155.00" y="738.60" font-size="10" fill="#d9dee3" stroke="#d9dee3" text-anchor="start">p90</text><path d="M1181.30 735.80H1191.50" stroke="#e07b26" stroke-width="1.8"/><text x="1194.60" y="738.60" font-size="10" fill="#d9dee3" stroke="#d9dee3" text-anchor="start">p99</text><path d="M233.5 812A5 5 0 0 1 238 806.6" fill="none" stroke="#a3b0bc" stroke-width="1.1"/><path d="M239.6 805.2V810.4H244.6A5 5 0 0 0 239.6 805.2Z" fill="none" stroke="#a3b0bc" stroke-width="1.05"/><text x="248.60" y="813.30" font-size="13.23" fill="#e9ecef" stroke="#e9ecef" text-anchor="start" font-weight="700">Cost Breakdown</text><rect x="755" y="799.7" width="63" height="24" rx="3.5" fill="none" stroke="#2d3640" stroke-width="1"/><path d="M754.6 823.5V799.7H704Q700.8 799.7 700.8 803V823.5" fill="#22303d" stroke="#84b4dc" stroke-width="1.2"/><text x="713.60" y="815.70" font-size="10.6" fill="#a8d4f4" stroke="#a8d4f4" text-anchor="start">Model</text><text x="767.60" y="815.70" font-size="10.6" fill="#e9ecef" stroke="#e9ecef" text-anchor="start">Provider</text><path d="M877 804V813.5M878.6 812.5L881.2 809.5L883.2 811.2L886.6 807.4" fill="none" stroke="#a3b0bc" stroke-width="1"/><text x="891.30" y="813.30" font-size="13.47" fill="#e9ecef" stroke="#e9ecef" text-anchor="start" font-weight="700">Cost Over Time</text><rect x="1398" y="799.7" width="63" height="24" rx="3.5" fill="none" stroke="#2d3640" stroke-width="1"/><path d="M1398 823.5V799.7H1346.7Q1343.5 799.7 1343.5 803V823.5" fill="#22303d" stroke="#84b4dc" stroke-width="1.2"/><text x="1356.60" y="815.70" font-size="10.6" fill="#a8d4f4" stroke="#a8d4f4" text-anchor="start">Model</text><text x="1411.30" y="815.70" font-size="10.6" fill="#e9ecef" stroke="#e9ecef" text-anchor="start">Provider</text><rect x="1481" y="236.2" width="12" height="573.4" fill="#2a2a2a"/><rect x="1481" y="236.2" width="1" height="573.4" fill="#363636"/><rect x="1492" y="236.2" width="1" height="573.4" fill="#363636"/><rect x="1484" y="387.5" width="6" height="290.7" rx="3" fill="#6b6b6b"/></svg>
<div class="r" style="left:43px;top:29px;width:1474px;height:805px;border:1px solid rgba(170,168,175,0.3);border-radius:12px;box-sizing:border-box;pointer-events:none;"></div>
</body></html>
